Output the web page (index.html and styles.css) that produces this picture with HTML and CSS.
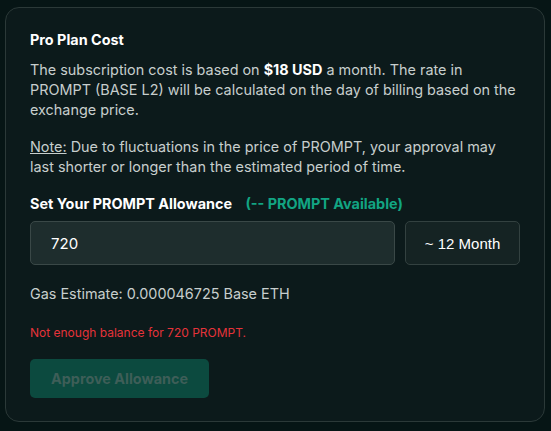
FILE: index.html
```html
<!DOCTYPE html>
<html>
<head>
<meta charset="utf-8">
<link rel="stylesheet" href="styles.css">
</head>
<body>
<div class="card">
  <h3 class="title">Pro Plan Cost</h3>
  <p class="desc">The subscription cost is based on <b>$18 USD</b> a month. The rate in PROMPT (BASE L2) will be calculated on the day of billing based on the exchange price.</p>
  <p class="desc note"><u>Note:</u> Due to fluctuations in the price of PROMPT, your approval may last shorter or longer than the estimated period of time.</p>
  <div class="label">Set Your PROMPT Allowance <span class="avail">(-- PROMPT Available)</span></div>
  <div class="row">
    <input class="amount" type="text" value="720">
    <div class="months">~ 12 Month</div>
  </div>
  <div class="gas">Gas Estimate: 0.000046725 Base ETH</div>
  <div class="error">Not enough balance for 720 PROMPT.</div>
  <button class="approve" disabled>Approve Allowance</button>
</div>
</body>
</html>
```
FILE: styles.css
```css
html, body {
  margin: 0;
  background: #061515;
}
body {
  padding: 7px 7px 9px 5px;
  font-family: Inter, "Noto Sans", sans-serif;
  color: #c9d0cf;
}
.card {
  width: 490px;
  border: 1px solid #2b3938;
  border-radius: 14px;
  background: #0c1a1b;
  padding: 22px 24px 23px 24px;
  min-height: 368px;
  box-sizing: content-box;
}
.title {
  margin: 0;
  font-size: 14.4px;
  line-height: 20px;
  font-weight: 700;
  color: #ffffff;
}
.desc {
  margin: 10px 0 0 0;
  font-size: 14.4px;
  line-height: 20px;
  color: #c7cecd;
}
.desc b {
  color: #ffffff;
}
.note {
  margin-top: 17px;
}
.label {
  margin-top: 17px;
  font-size: 14.4px;
  line-height: 20px;
  font-weight: 700;
  color: #ffffff;
}
.avail {
  color: #12a583;
  margin-left: 10px;
}
.row {
  display: flex;
  gap: 10px;
  margin-top: 7px;
}
.amount {
  flex: 1;
  min-width: 0;
  box-sizing: border-box;
  height: 44px;
  margin: 0;
  padding: 0 20px;
  border: 1px solid #3a4847;
  border-radius: 5px;
  background: #1e2d2d;
  color: #ffffff;
  font-family: Inter, sans-serif;
  font-size: 15px;
  outline: none;
}
.months {
  box-sizing: border-box;
  width: 115px;
  height: 44px;
  display: flex;
  align-items: center;
  justify-content: center;
  border: 1px solid #334140;
  border-radius: 5px;
  background: #152323;
  color: #ffffff;
  font-family: "Liberation Sans", Arial, sans-serif;
  font-size: 15px;
}
.gas {
  margin-top: 19px;
  font-size: 14.4px;
  line-height: 20px;
  color: #c7cecd;
}
.error {
  margin-top: 21px;
  font-size: 12px;
  line-height: 16px;
  color: #e5333a;
}
.approve {
  display: block;
  margin-top: 18px;
  height: 39px;
  padding: 0 21px;
  border: none;
  border-radius: 5px;
  background: #0c4a3f;
  color: #3e5e58;
  font-family: Inter, sans-serif;
  font-size: 14.4px;
  font-weight: 700;
}
```
